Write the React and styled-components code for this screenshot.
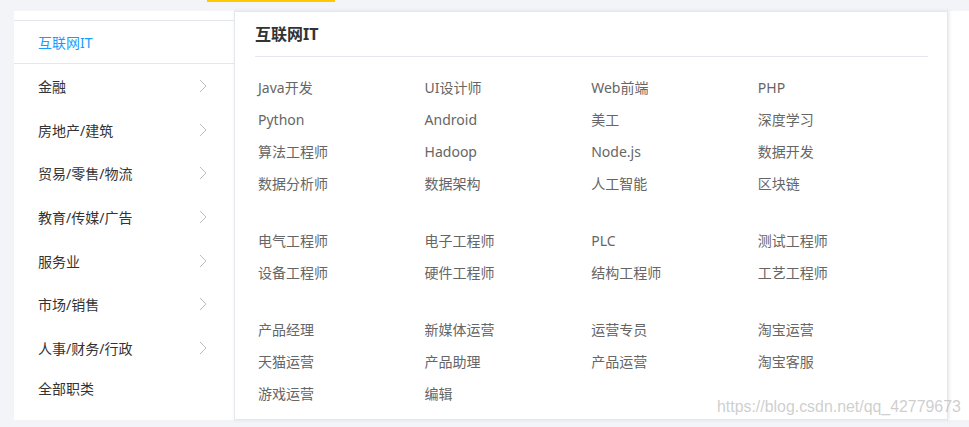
import React from "react";
import styled, { createGlobalStyle } from "styled-components";

const GlobalStyle = createGlobalStyle`
  body {
    margin: 0;
    background: #f2f4f7;
    font-family: "Noto Sans", "Noto Sans CJK SC", sans-serif;
  }
`;

const Page = styled.div`
  position: relative;
  width: 969px;
  height: 427px;
  overflow: hidden;
`;

const TopBar = styled.div`
  height: 11px;
  display: flex;
`;

const Highlight = styled.div`
  margin-left: 207px;
  width: 128px;
  height: 2px;
  background: #ffc900;
`;

const Board = styled.div`
  margin-left: 14px;
  height: 409px;
  background: #fff;
  display: flex;
`;

const Side = styled.ul`
  width: 220px;
  margin: 0;
  padding: 9px 0 0;
  list-style: none;
  flex-shrink: 0;
`;

const SideItem = styled.li`
  display: flex;
  align-items: center;
  justify-content: space-between;
  height: ${(p) => (p.$active ? "42px" : p.$last ? "36px" : "43.7px")};
  padding: 0 27px 0 24px;
  font-size: 14px;
  color: ${(p) => (p.$active ? "#1a9cff" : "#333")};
  border-top: ${(p) => (p.$active ? "1px solid #e4e7ed" : "none")};
  border-bottom: ${(p) => (p.$active ? "1px solid #e4e7ed" : "none")};
  cursor: pointer;
`;

const Chevron = styled.svg`
  width: 8px;
  height: 14px;
  flex-shrink: 0;
`;

const Panel = styled.div`
  width: 714px;
  height: 409px;
  box-sizing: border-box;
  border: 1px solid #e4e7ed;
  box-shadow: 1px 0 3px rgba(200, 206, 216, 0.5);
  padding: 0 19px 0 20px;
  flex-shrink: 0;
`;

const Title = styled.h3`
  margin: 0;
  height: 44px;
  line-height: 44px;
  font-size: 16px;
  font-weight: bold;
  color: #333;
  border-bottom: 1px solid #e4e7ed;
`;

const Groups = styled.div`
  padding: 15px 0 0 3px;
  display: flex;
  flex-direction: column;
  gap: 25px;
`;

const Grid = styled.div`
  display: grid;
  grid-template-columns: repeat(4, 166.6px);
  grid-auto-rows: 32px;
`;

const Job = styled.a`
  font-size: 14px;
  line-height: 32px;
  color: #666;
  text-decoration: none;
  cursor: pointer;
`;

const Watermark = styled.div`
  position: absolute;
  left: 717px;
  top: 398px;
  font-family: "Liberation Sans", Arial, sans-serif;
  font-size: 15.9px;
  color: rgba(190, 190, 190, 0.75);
  white-space: nowrap;
  pointer-events: none;
`;

const categories = [
  "金融",
  "房地产/建筑",
  "贸易/零售/物流",
  "教育/传媒/广告",
  "服务业",
  "市场/销售",
  "人事/财务/行政",
];

const groups = [
  [
    "Java开发", "UI设计师", "Web前端", "PHP",
    "Python", "Android", "美工", "深度学习",
    "算法工程师", "Hadoop", "Node.js", "数据开发",
    "数据分析师", "数据架构", "人工智能", "区块链",
  ],
  ["电气工程师", "电子工程师", "PLC", "测试工程师", "设备工程师", "硬件工程师", "结构工程师", "工艺工程师"],
  ["产品经理", "新媒体运营", "运营专员", "淘宝运营", "天猫运营", "产品助理", "产品运营", "淘宝客服", "游戏运营", "编辑"],
];

const Arrow = () => (
  <Chevron viewBox="0 0 8 14">
    <polyline points="1,1 7,7 1,13" fill="none" stroke="#bdbdbd" strokeWidth="1" />
  </Chevron>
);

export default function App() {
  return (
    <Page>
      <GlobalStyle />
      <TopBar>
        <Highlight />
      </TopBar>
      <Board>
        <Side>
          <SideItem $active>互联网IT</SideItem>
          {categories.map((c) => (
            <SideItem key={c}>
              {c}
              <Arrow />
            </SideItem>
          ))}
          <SideItem $last>全部职类</SideItem>
        </Side>
        <Panel>
          <Title>互联网IT</Title>
          <Groups>
            {groups.map((g, i) => (
              <Grid key={i}>
                {g.map((j) => (
                  <Job key={j}>{j}</Job>
                ))}
              </Grid>
            ))}
          </Groups>
        </Panel>
      </Board>
      <Watermark>https://blog.csdn.net/qq_42779673</Watermark>
    </Page>
  );
}
